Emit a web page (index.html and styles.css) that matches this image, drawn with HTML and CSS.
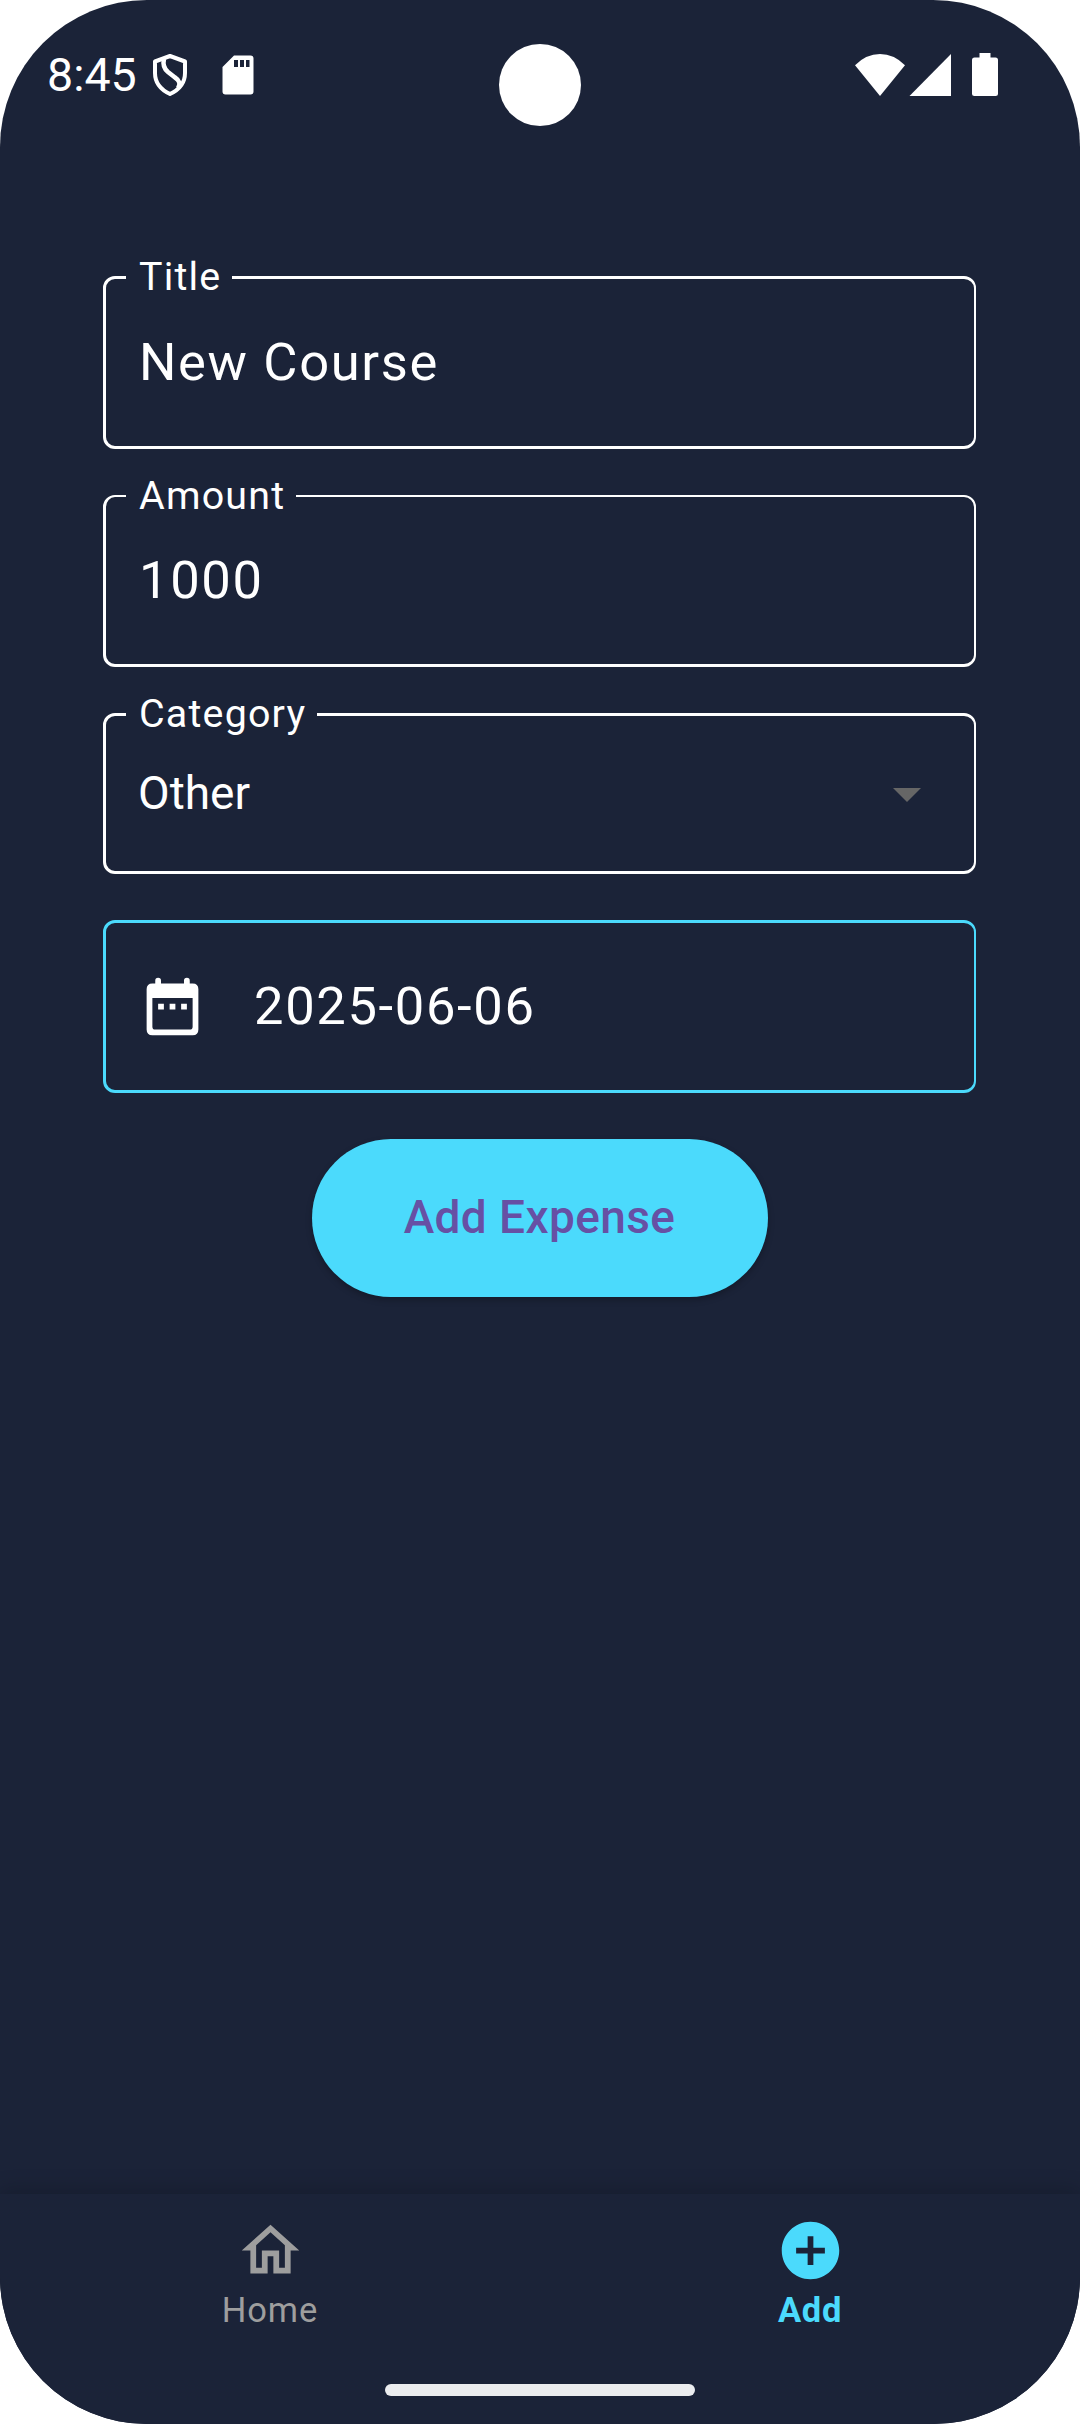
FILE: index.html
```html
<!DOCTYPE html>
<html lang="en">
<head>
<meta charset="utf-8">
<title>Add Expense</title>
<link rel="stylesheet" href="styles.css">
</head>
<body>
<div class="screen">
  <header class="status">
    <span class="clock">8:45</span>
    <svg class="shield" width="38" height="44" viewBox="0 0 38 44" fill="none" stroke="#fff" stroke-width="4" stroke-linejoin="round"><path d="M19 3L34 8.500V20Q34 34 19 41Q4 34 4 20V8.500Z"/><path stroke-width="4.500" d="M13 6Q11 14 17 19L24 24.500Q31 29 27 35"/></svg>
    <svg class="sd" width="32" height="40" viewBox="0 0 32 40"><path fill="#fff" fill-rule="evenodd" d="M12 .5H28.500Q31.500 .5 31.500 3.500V36.500Q31.500 39.500 28.500 39.500H3.500Q.5 39.500 .5 36.500V12ZM12 5V12H16V5ZM18 5V12H22V5ZM24 5V12H27.500V5Z"/></svg>
    <span class="camera"></span>
    <svg class="signals" width="144" height="44" viewBox="0 0 144 44" fill="#fff"><path d="M0 12.300Q11 1 25 1T50 12.300L25 43Z"/><path d="M54.500 43H96V1Z"/><path d="M124.500 0H135.500V4.500H140.500Q143 4.500 143 7V40.500Q143 43 140.500 43H119.500Q117 43 117 40.500V7Q117 4.500 119.500 4.500H124.500Z"/></svg>
  </header>
  <main class="form">
    <fieldset class="field title"><legend>Title</legend><span class="value">New Course</span></fieldset>
    <fieldset class="field amount"><legend>Amount</legend><span class="value">1000</span></fieldset>
    <fieldset class="field category"><legend>Category</legend><div class="select"><span>Other</span><svg width="28" height="14" viewBox="0 0 28 14"><path fill="#666" d="M0 0H28L14 14Z"/></svg></div></fieldset>
    <div class="date">
      <svg width="69" height="69" viewBox="0 0 24 24" fill="#fff"><path fill-rule="evenodd" d="M19 4H18V3Q18 2 17 2T16 3V4H8V3Q8 2 7 2T6 3V4H5Q3 4 3 6V20Q3 22 5 22H19Q21 22 21 20V6Q21 4 19 4ZM19 19Q19 20 18 20H6Q5 20 5 19V9H19ZM7 11H9V13H7ZM11 11H13V13H11ZM15 11H17V13H15Z"/></svg>
      <span class="value">2025-06-06</span>
    </div>
    <button class="submit">Add Expense</button>
  </main>
  <footer class="bottom">
    <nav class="tabs">
      <div class="tab"><svg width="69" height="69" viewBox="0 0 24 24" fill="currentColor"><path d="M12 5.690l5 4.500V18h-2v-6H9v6H7v-7.810l5-4.500M12 3L2 12h3v8h6v-6h2v6h6v-8h3L12 3z"/></svg><span>Home</span></div>
      <div class="tab active"><svg width="69" height="69" viewBox="0 0 24 24" fill="currentColor"><path d="M12 2C6.480 2 2 6.480 2 12s4.480 10 10 10 10-4.480 10-10S17.520 2 12 2zm5 11h-4v4h-2v-4H7v-2h4V7h2v4h4v2z"/></svg><span>Add</span></div>
    </nav>
    <div class="handle"></div>
  </footer>
</div>
</body>
</html>
```
FILE: styles.css
```css
* { box-sizing: border-box; }
body { margin: 0; background: #fff; font-family: Roboto, sans-serif; color: #fff; }
.screen { width: 1080px; height: 2424px; display: flex; flex-direction: column; background: #1b2338; border-radius: 147px; overflow: hidden; }
.status { position: relative; height: 254px; padding: 53px 81px 0 47px; display: flex; align-items: flex-start; }
.clock { font-size: 46.5px; line-height: 54px; margin-top: -5px; width: 104px; }
.sd { margin: 2px 0 0 33px; }
.signals { margin-left: auto; }
.camera { position: absolute; left: 499px; top: 44px; width: 82px; height: 82px; border-radius: 50%; background: #fff; }
.form { flex: 1; margin: 0 104px 0 103px; display: flex; flex-direction: column; }
.field { margin: 0 0 24px; padding: 0; min-width: 0; border: 3px solid #fff; border-right-width: 2px; border-radius: 12px; }
.field legend { margin-left: 20px; padding: 0 11px 2px 13px; font-size: 39.4px; line-height: 45px; letter-spacing: 1.2px; }
.value { font-size: 52.5px; line-height: 60px; letter-spacing: 1.65px; }
.field .value { display: block; padding: 31px 33px 0; }
.title { height: 195px; }
.amount { height: 194px; border-top-width: 2px; }
.amount legend { line-height: 46px; padding-bottom: 0; }
.category { height: 183px; margin-bottom: 46px; }
.select { display: flex; justify-content: space-between; align-items: center; padding: 28px 53px 0 32px; font-size: 46px; line-height: 54px; }
.select svg { margin-top: 3px; }
.date { height: 173px; border: 3px solid #4bdafc; border-right-width: 2px; border-radius: 12px; display: flex; align-items: center; gap: 47px; padding-left: 32px; }
.date .value { margin-top: -2px; }
.submit { align-self: center; width: 456px; height: 158px; margin-top: 46px; padding: 0 0 2px; border: 0; border-radius: 79px; background: #4bdafc; color: #6750a4; font: 500 46px Roboto, sans-serif; letter-spacing: .4px; box-shadow: 0 3px 6px rgba(0, 0, 0, .25); }
.bottom { height: 230px; background: #1b2338; box-shadow: 0 -4px 20px rgba(0, 0, 0, .18); display: flex; flex-direction: column; align-items: center; }
.tabs { width: 100%; height: 190px; padding-top: 22px; display: flex; }
.tab { flex: 1; display: flex; flex-direction: column; align-items: center; color: #9e9e9e; font-size: 34.5px; line-height: 42px; letter-spacing: .9px; }
.tab span { margin-top: 4px; }
.tab.active { color: #4bdafc; font-weight: 700; letter-spacing: .6px; }
.handle { width: 310px; height: 12px; border-radius: 6px; background: #ecedef; }
```
